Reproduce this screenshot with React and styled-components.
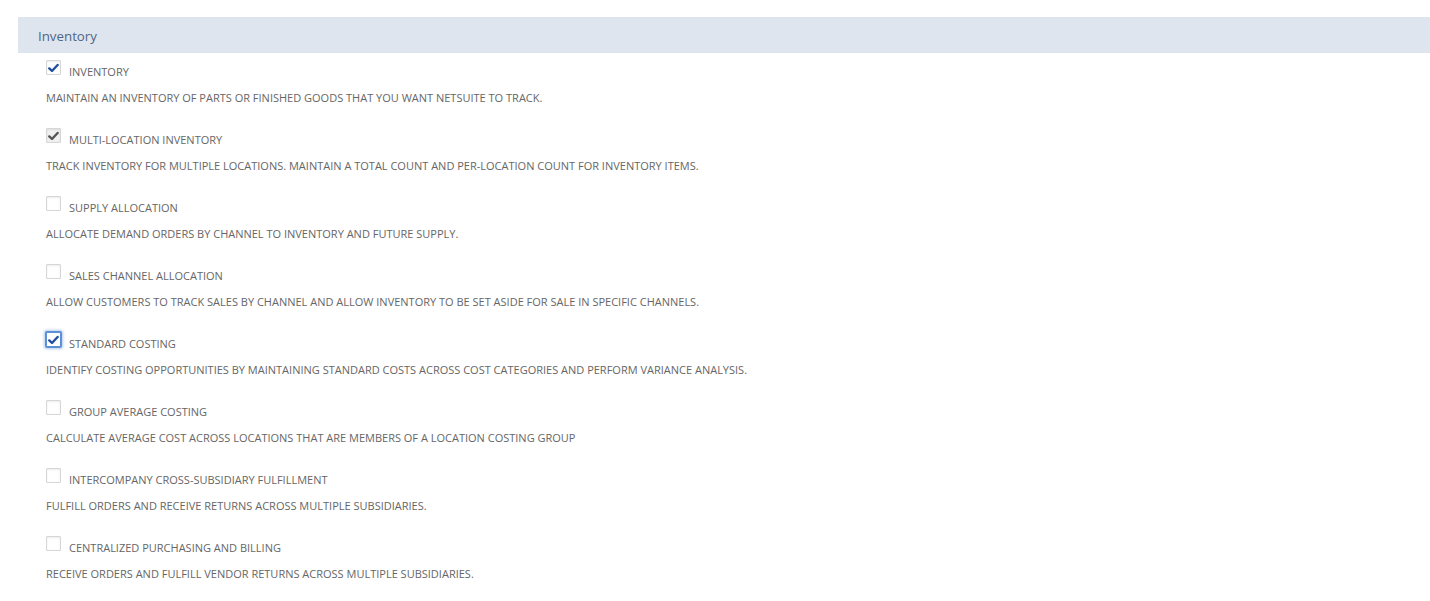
import styled, { createGlobalStyle } from 'styled-components';

const GlobalStyle = createGlobalStyle`
    body {
        margin: 0;
        background: #ffffff;
        font-family: 'Open Sans', 'Liberation Sans', sans-serif;
    }
`;

const Section = styled.section`
    margin: 17px 0 0 18px;
`;

const Header = styled.div`
    box-sizing: border-box;
    height: 36px;
    line-height: 36px;
    padding: 1px 0 0 20px;
    background: #dfe5ef;
    color: #4f6685;
    font-size: 13.3px;
`;

const List = styled.div`
    padding: 7px 0 0 28px;
`;

const Item = styled.div`
    height: 68px;
`;

const Line = styled.label`
    display: flex;
    align-items: flex-start;
`;

const Box = styled.span`
    box-sizing: border-box;
    width: 15px;
    height: 15px;
    display: flex;
    align-items: center;
    justify-content: center;
    border: 1px solid ${(p) => (p.focused ? '#5b8fd6' : '#d6d6d6')};
    border-radius: 1px;
    box-shadow: ${(p) =>
        p.focused
            ? '0 0 0 1px #5b8fd6, 0 0 3px 2px rgba(91, 143, 214, 0.45)'
            : 'inset 0 1px 2px rgba(0, 0, 0, 0.08)'};
    background: ${(p) => (p.disabled ? '#f0f0f0' : '#fff')};
`;

const Label = styled.span`
    margin: 4px 0 0 8px;
    font-size: 11px;
    line-height: 15px;
    color: #666;
    text-transform: uppercase;
`;

const Description = styled.div`
    margin-top: 11px;
    font-size: 11px;
    line-height: 15px;
    color: #666;
    text-transform: uppercase;
`;

const Check = ({ color }) => (
    <svg width="11" height="10" viewBox="0 0 11 10">
        <path d="M1.3 5.4 L4 8 L9.6 2" fill="none" stroke={color} strokeWidth="2.4" strokeLinecap="round" strokeLinejoin="round" />
    </svg>
);

const features = [
    { label: 'Inventory', desc: 'Maintain an inventory of parts or finished goods that you want NetSuite to track.', checked: true },
    { label: 'Multi-Location Inventory', desc: 'Track inventory for multiple locations. Maintain a total count and per-location count for inventory items.', checked: true, disabled: true },
    { label: 'Supply Allocation', desc: 'Allocate demand orders by channel to inventory and future supply.' },
    { label: 'Sales Channel Allocation', desc: 'Allow customers to track sales by channel and allow inventory to be set aside for sale in specific channels.' },
    { label: 'Standard Costing', desc: 'Identify costing opportunities by maintaining standard costs across cost categories and perform variance analysis.', checked: true, focused: true },
    { label: 'Group Average Costing', desc: 'Calculate average cost across locations that are members of a location costing group' },
    { label: 'Intercompany Cross-Subsidiary Fulfillment', desc: 'Fulfill orders and receive returns across multiple subsidiaries.' },
    { label: 'Centralized Purchasing and Billing', desc: 'Receive orders and fulfill vendor returns across multiple subsidiaries.' },
];

const App = () => (
    <>
        <GlobalStyle />
        <Section>
            <Header>Inventory</Header>
            <List>
                {features.map((f) => (
                    <Item key={f.label}>
                        <Line>
                            <Box focused={f.focused} disabled={f.disabled}>
                                {f.checked && <Check color={f.disabled ? '#555' : '#1f4f9e'} />}
                            </Box>
                            <Label>{f.label}</Label>
                        </Line>
                        <Description>{f.desc}</Description>
                    </Item>
                ))}
            </List>
        </Section>
    </>
);

export default App;
